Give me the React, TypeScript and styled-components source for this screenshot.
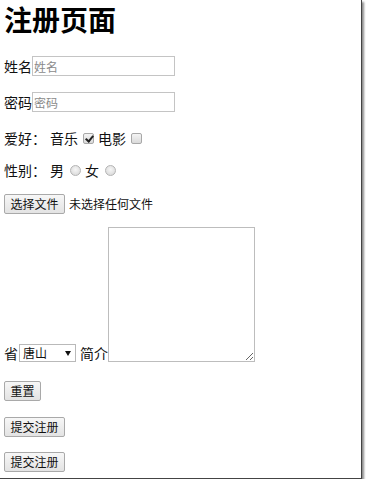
import React from "react";
import styled, { createGlobalStyle } from "styled-components";

const Global = createGlobalStyle`
  html, body { margin: 0; padding: 0; background: #fff; }
  body { font-family: "Noto Sans CJK SC", "Noto Sans", sans-serif; color: #111; font-size: 14px; }
`;

const Frame = styled.div`
  width: 362px;
  height: 479px;
  box-sizing: border-box;
  border-right: 1px solid #444;
  border-bottom: 1px solid #444;
  box-shadow: 2px 2px 2px rgba(0,0,0,0.45);
  background: #fff;
  overflow: hidden;
`;

const Page = styled.div`
  display: flex;
  flex-direction: column;
  align-items: flex-start;
  padding-left: 4px;
`;

const Title = styled.h1`
  margin: 0;
  font-size: 28px;
  line-height: 38px;
  font-weight: 700;
  color: #000;
  letter-spacing: 0;
`;

const Row = styled.div<{ $top: number; $h?: number; $end?: boolean }>`
  display: flex;
  align-items: ${(p) => (p.$end ? "flex-end" : "center")};
  margin-top: ${(p) => p.$top}px;
  height: ${(p) => (p.$h ? `${p.$h}px` : "auto")};
  font-size: 14px;
  line-height: 18px;
`;

const Label = styled.span<{ $w?: number }>`
  display: inline-block;
  white-space: nowrap;
  ${(p) => (p.$w ? `width: ${p.$w}px;` : "")}
`;

const TextInput = styled.input`
  box-sizing: border-box;
  width: 143px;
  height: 20px;
  margin: 0;
  padding: 0 1px;
  border: 1px solid #c4c4c4;
  font-family: "Noto Sans CJK SC", sans-serif;
  font-size: 12px;
  outline: none;
  &::placeholder { color: #8a8a8a; }
`;

const Box = styled.input`
  appearance: none;
  -webkit-appearance: none;
  box-sizing: border-box;
  width: 11px;
  height: 11px;
  margin: 0 4px 0 5px;
  border: 1px solid #a8a8a8;
  border-radius: 2px;
  background: linear-gradient(#f4f4f4, #dadada);
  position: relative;
  &:checked::after {
    content: "";
    position: absolute;
    left: 3px;
    top: 0px;
    width: 3px;
    height: 6px;
    border: solid #222;
    border-width: 0 2px 2px 0;
    transform: rotate(40deg);
  }
`;

const Radio = styled.input`
  appearance: none;
  -webkit-appearance: none;
  box-sizing: border-box;
  width: 11px;
  height: 11px;
  margin: 0 4px 0 6px;
  border: 1px solid #b4b4b4;
  border-radius: 50%;
  background: radial-gradient(circle at 50% 40%, #f6f6f6, #d4d4d4);
`;

const Btn = styled.button<{ $w: number }>`
  box-sizing: border-box;
  width: ${(p) => p.$w}px;
  height: 20px;
  padding: 0;
  margin: 0;
  border: 1px solid #a9a9a9;
  border-radius: 2px;
  background: linear-gradient(#f7f7f7, #e3e3e3);
  font-family: "Noto Sans CJK SC", sans-serif;
  font-size: 12px;
  line-height: 18px;
  color: #111;
`;

const FileNote = styled.span`
  margin-left: 4px;
  font-size: 12px;
`;

const Select = styled.div`
  box-sizing: border-box;
  width: 57px;
  height: 18px;
  margin: 0 4px 0 1px;
  border: 1px solid #b9b9b9;
  display: flex;
  align-items: center;
  justify-content: space-between;
  padding: 0 4px 0 3px;
  font-size: 12px;
  line-height: 16px;
`;

const Arrow = styled.span`
  width: 0;
  height: 0;
  border-left: 3px solid transparent;
  border-right: 3px solid transparent;
  border-top: 5px solid #111;
`;

const TextArea = styled.textarea`
  box-sizing: border-box;
  width: 147px;
  height: 135px;
  margin: 0;
  border: 1px solid #bdbdbd;
  resize: both;
  outline: none;
`;

export default function App() {
  return (
    <>
      <Global />
      <Frame>
        <Page>
          <Title>注册页面</Title>
          <Row $top={18}>
            <Label>姓名</Label>
            <TextInput placeholder="姓名" />
          </Row>
          <Row $top={16}>
            <Label>密码</Label>
            <TextInput placeholder="密码" />
          </Row>
          <Row $top={16} $h={20}>
            <Label $w={46}>爱好：</Label>
            <Label>音乐</Label>
            <Box type="checkbox" defaultChecked />
            <Label>电影</Label>
            <Box type="checkbox" />
          </Row>
          <Row $top={12} $h={20}>
            <Label $w={46}>性别：</Label>
            <Label>男</Label>
            <Radio type="radio" name="sex" />
            <Label>女</Label>
            <Radio type="radio" name="sex" />
          </Row>
          <Row $top={13} $h={21}>
            <Btn $w={61}>选择文件</Btn>
            <FileNote>未选择任何文件</FileNote>
          </Row>
          <Row $top={13} $end>
            <Label>省</Label>
            <Select>
              <span>唐山</span>
              <Arrow />
            </Select>
            <Label>简介</Label>
            <TextArea />
          </Row>
          <Row $top={19}>
            <Btn $w={37}>重置</Btn>
          </Row>
          <Row $top={16}>
            <Btn $w={61}>提交注册</Btn>
          </Row>
          <Row $top={15}>
            <Btn $w={61}>提交注册</Btn>
          </Row>
        </Page>
      </Frame>
    </>
  );
}
